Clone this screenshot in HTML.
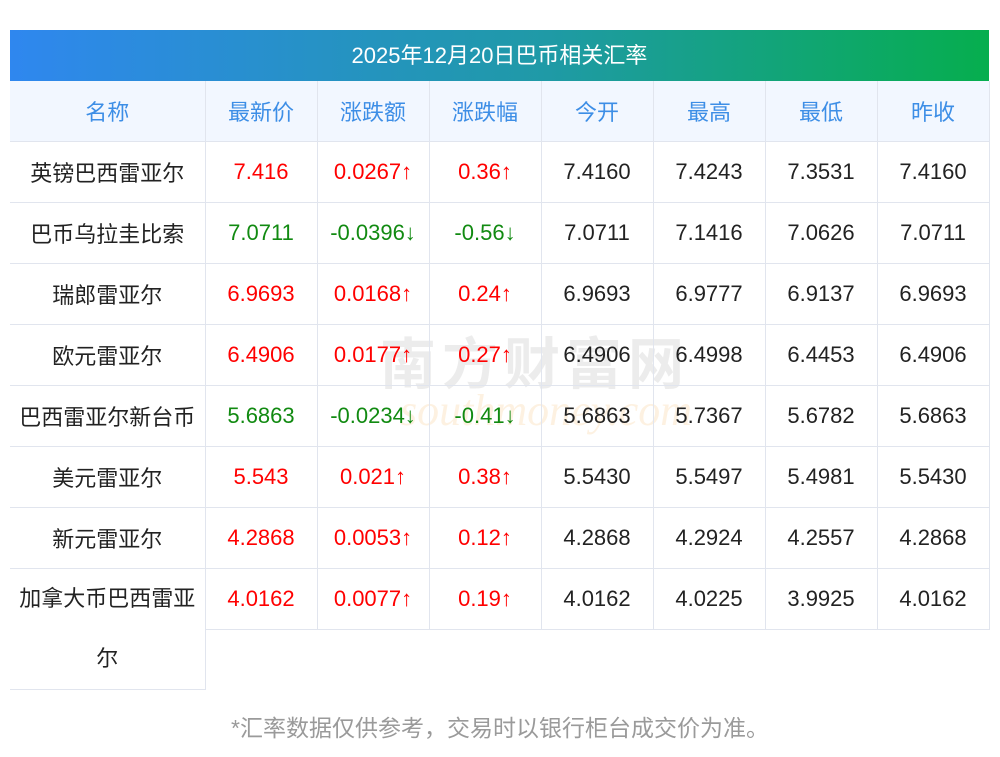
<!DOCTYPE html>
<html><head><meta charset="utf-8"><style>
body{margin:0;background:#fff;width:1000px;height:757px;position:relative;font-family:"Liberation Sans","Noto Sans CJK SC",sans-serif;overflow:hidden}
.title{position:absolute;left:10px;top:30px;width:979px;height:51px;background:linear-gradient(90deg,#2f87ef,#1f9aa6 55%,#06ae4e);color:#fff;font-size:22px;line-height:51px;text-align:center}
table{position:absolute;left:10px;top:81px;border-collapse:collapse;table-layout:fixed;width:979px}
td,th{height:60px;padding:0;text-align:center;font-size:22px;font-weight:normal;border-right:1px solid #e1e5ee;border-bottom:1px solid #e1e5ee;color:#222}
th{background:#f2f7ff;color:#3d8ee6}
td:first-child{padding:0 3px;white-space:normal}
.r{color:#f00}.g{color:#118a11}
.last td.n{height:120px;line-height:60px;vertical-align:top}
.last td.e{border:none}
.foot{position:absolute;top:709px;left:0;width:1000px;text-align:center;color:#9a9a9a;font-size:23px}
.wm{position:absolute;left:380px;top:320px;font-size:56px;color:rgba(200,200,200,.35);font-weight:bold;letter-spacing:6px}
.wm2{position:absolute;left:400px;top:385px;font-size:44px;color:rgba(250,220,180,.4);font-style:italic;font-family:"Liberation Serif",serif}
</style></head><body>
<div class="title">2025年12月20日巴币相关汇率</div>
<div class="wm">南方财富网</div><div class="wm2">southmoney.com</div>
<table>
<colgroup><col style="width:195px"><col style="width:112px"><col style="width:112px"><col style="width:112px"><col style="width:112px"><col style="width:112px"><col style="width:112px"><col style="width:112px"></colgroup>
<tr><th>名称</th><th>最新价</th><th>涨跌额</th><th>涨跌幅</th><th>今开</th><th>最高</th><th>最低</th><th>昨收</th></tr>
<tr><td>英镑巴西雷亚尔</td><td class="r">7.416</td><td class="r">0.0267↑</td><td class="r">0.36↑</td><td>7.4160</td><td>7.4243</td><td>7.3531</td><td>7.4160</td></tr>
<tr><td>巴币乌拉圭比索</td><td class="g">7.0711</td><td class="g">-0.0396↓</td><td class="g">-0.56↓</td><td>7.0711</td><td>7.1416</td><td>7.0626</td><td>7.0711</td></tr>
<tr><td>瑞郎雷亚尔</td><td class="r">6.9693</td><td class="r">0.0168↑</td><td class="r">0.24↑</td><td>6.9693</td><td>6.9777</td><td>6.9137</td><td>6.9693</td></tr>
<tr><td>欧元雷亚尔</td><td class="r">6.4906</td><td class="r">0.0177↑</td><td class="r">0.27↑</td><td>6.4906</td><td>6.4998</td><td>6.4453</td><td>6.4906</td></tr>
<tr><td style="white-space:nowrap">巴西雷亚尔新台币</td><td class="g">5.6863</td><td class="g">-0.0234↓</td><td class="g">-0.41↓</td><td>5.6863</td><td>5.7367</td><td>5.6782</td><td>5.6863</td></tr>
<tr><td>美元雷亚尔</td><td class="r">5.543</td><td class="r">0.021↑</td><td class="r">0.38↑</td><td>5.5430</td><td>5.5497</td><td>5.4981</td><td>5.5430</td></tr>
<tr><td>新元雷亚尔</td><td class="r">4.2868</td><td class="r">0.0053↑</td><td class="r">0.12↑</td><td>4.2868</td><td>4.2924</td><td>4.2557</td><td>4.2868</td></tr>
<tr class="last"><td class="n" rowspan="2">加拿大币巴西雷亚<br>尔</td><td class="r">4.0162</td><td class="r">0.0077↑</td><td class="r">0.19↑</td><td>4.0162</td><td>4.0225</td><td>3.9925</td><td>4.0162</td></tr>
<tr class="last"><td class="e" colspan="7" style="height:59px"></td></tr>
</table>
<div class="foot">*汇率数据仅供参考，交易时以银行柜台成交价为准。</div>
</body></html>
